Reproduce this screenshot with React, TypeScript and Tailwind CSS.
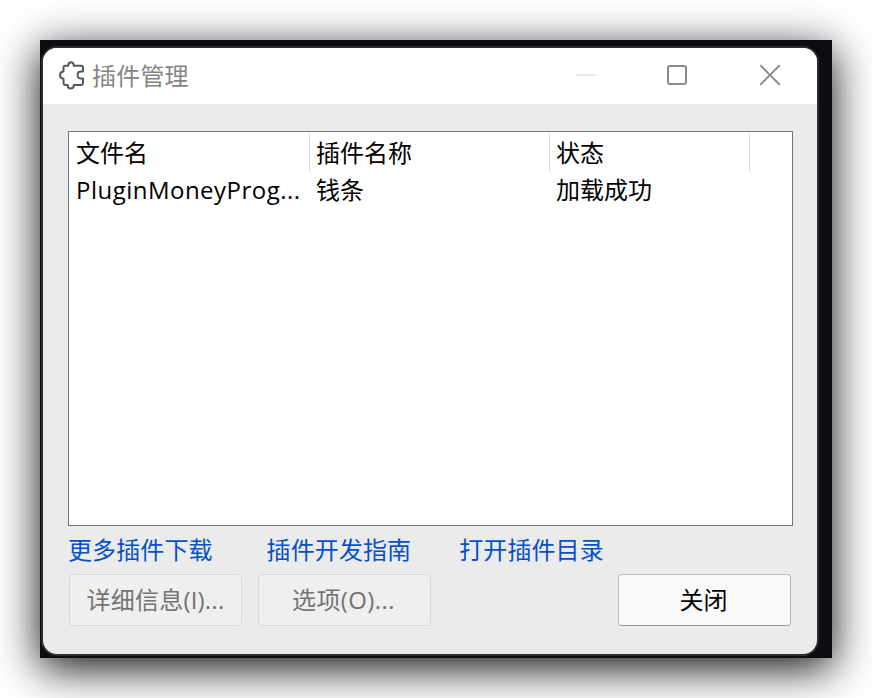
import React from "react";

const columns = [
  { label: "文件名", value: "PluginMoneyProg...", width: "w-[241px]", pad: "pl-[7px]", tracking: "tracking-[0.48px]" },
  { label: "插件名称", value: "钱条", width: "w-[240px]", pad: "pl-[6px]", tracking: "tracking-normal" },
  { label: "状态", value: "加载成功", width: "w-[200px]", pad: "pl-[6px]", tracking: "tracking-normal" },
];

function PuzzleIcon() {
  return (
    <svg width="28" height="30" viewBox="0 0 28 30" fill="none" stroke="#585858" strokeWidth="2" strokeLinejoin="round" strokeLinecap="round">
      <path d="M5.5 7.5Q5.5 5.8 7.2 5.8H10.2C10.2 3.4 11 2.2 13 2.2C15 2.2 15.8 3.4 15.8 5.8H23Q25 5.8 25 7.8V11.6H23.2C20.8 11.6 19.6 13 19.6 15C19.6 17 20.8 18.6 23.2 18.6H25V23Q25 25 23 25H15.8C15.8 27.2 14.6 28.5 12.6 28.5C10.6 28.5 9.6 27.2 9.6 25H7.5Q5.5 25 5.5 23V18.8C3.2 18.6 2 17.2 2 15.1C2 13 3.2 11.8 5.5 11.6Z" />
    </svg>
  );
}

function TitleBar() {
  return (
    <header className="flex h-14 shrink-0 items-center bg-white pb-[2px] pl-[15px] text-[#858585]">
      <PuzzleIcon />
      <h1 className="ml-[6px] flex-1 pt-px tracking-[0.2px]">插件管理</h1>
      <div className="flex items-center pr-[36px]">
        <span className="mr-[71px] h-[2px] w-5 bg-[#e6e6e6]" />
        <span className="mr-[72px] h-5 w-5 rounded-[3px] border-2 border-[#8a8a8a]" />
        <svg width="22" height="22" viewBox="0 0 22 22" stroke="#858585" strokeWidth="1.9">
          <path d="M1.2 1.2 20.8 20.8M20.8 1.2 1.2 20.8" />
        </svg>
      </div>
    </header>
  );
}

export default function App() {
  return (
    <div className="h-[698px] w-[872px] overflow-hidden bg-white p-10 font-['Open_Sans','Noto_Sans_CJK_SC',sans-serif] text-[24px] leading-[36px] text-black">
      <div className="h-[618px] w-[792px] bg-[#0b0d10] pl-px pt-[6px] shadow-[0_10px_41px_rgba(0,0,0,0.95)]">
        <main className="flex h-[610px] w-[778px] flex-col overflow-hidden rounded-[16px] border-2 border-[#2b2d31] bg-[#ebebeb]">
          <TitleBar />
          <section className="ml-[25px] mt-[27px] h-[395px] w-[725px] shrink-0 border border-[#717680] bg-white pt-px">
            <div className="flex">
              {columns.map((c) => (
                <div key={c.label} className={`${c.width} ${c.pad} h-[39px] shrink-0 whitespace-nowrap border-r border-[#dedede] pt-[2px]`}>
                  {c.label}
                </div>
              ))}
            </div>
            <div className="flex">
              {columns.map((c) => (
                <div key={c.label} className={`${c.width} ${c.pad} ${c.tracking} h-9 shrink-0 whitespace-nowrap`}>
                  {c.value}
                </div>
              ))}
            </div>
          </section>
          <nav className="ml-[25px] mt-[6px] flex h-9 shrink-0 tracking-[0.1px] text-[#0650c8]">
            <a className="mr-[54px]">更多插件下载</a>
            <a className="mr-[48px]">插件开发指南</a>
            <a>打开插件目录</a>
          </nav>
          <footer className="mt-[6px] flex pl-[26px] text-[#747474]">
            <button className="mr-[16px] h-[52px] w-[173px] rounded-[4px] border border-[#d8d8d8] bg-[#efefef] tracking-[0.2px]">详细信息(I)...</button>
            <button className="h-[52px] w-[173px] rounded-[4px] border border-[#d8d8d8] bg-[#efefef] pr-[2px] tracking-[0.4px]">选项(O)...</button>
            <button className="ml-auto mr-[26px] h-[52px] w-[173px] rounded-[4px] border border-[#b8b8b8] border-b-[#9a9a9a] bg-[#f9f9f9] pr-[2px] text-black">关闭</button>
          </footer>
        </main>
      </div>
    </div>
  );
}
